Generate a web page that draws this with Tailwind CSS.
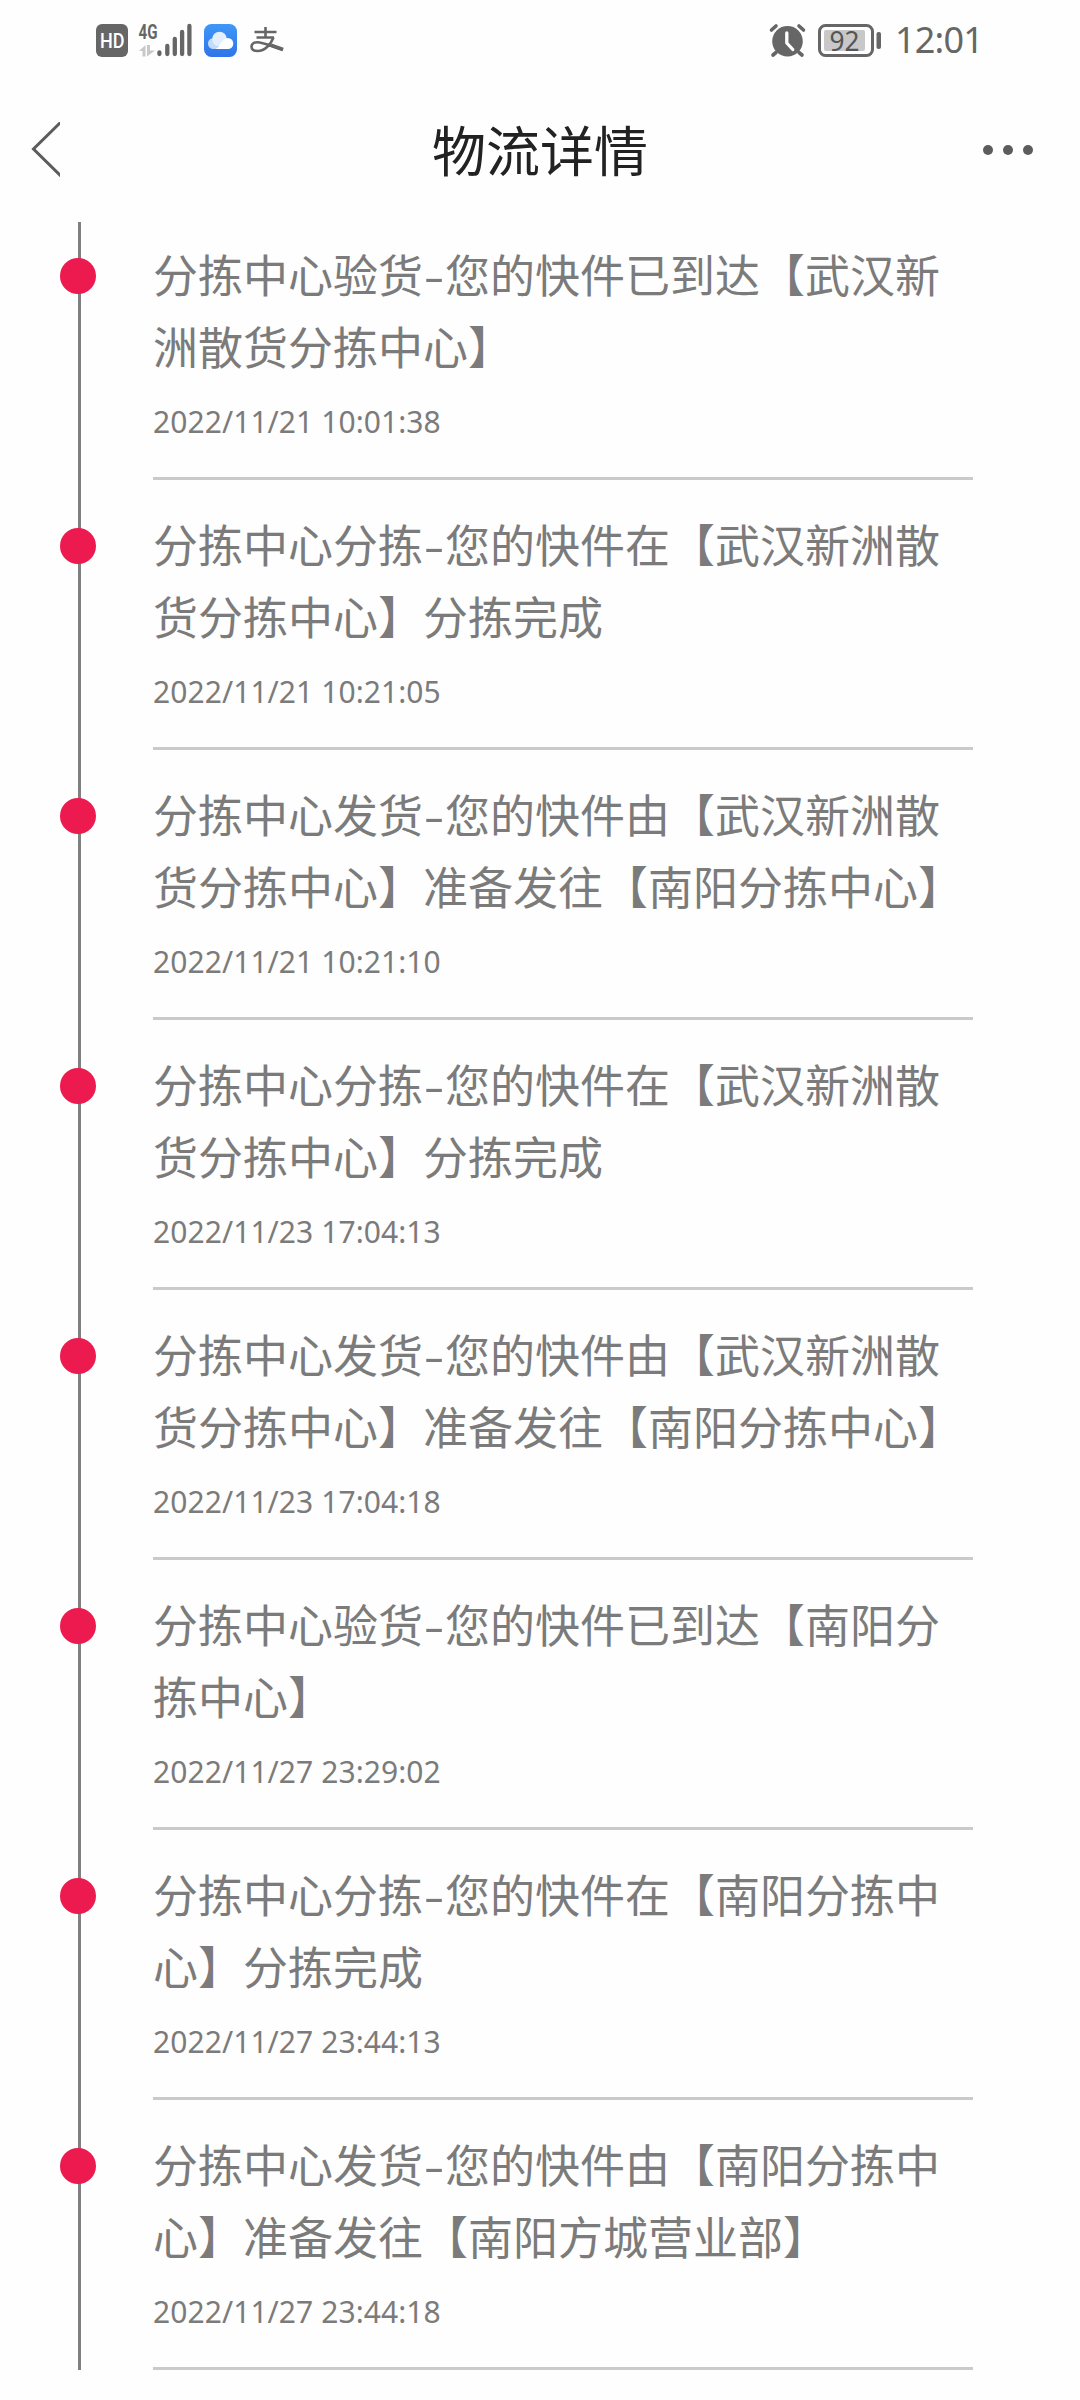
<!DOCTYPE html>
<html lang="zh-CN">
<head>
  <meta charset="UTF-8">
  <meta name="viewport" content="width=device-width, initial-scale=1.0">

  <title>物流详情</title>

  <!-- Tailwind CSS -->
  <script src="https://cdn.jsdelivr.net/npm/@tailwindcss/browser@4"></script>
</head>

<body class="bg-[#fefefe] font-['Noto_Sans','Noto_Sans_CJK_SC',sans-serif] text-[#7b7b7b]">

  <!-- Status Bar -->
  <header class="flex h-20 items-center justify-between pl-24 pr-[98px] text-[#666666]">
    <div class="flex items-center">
      <!-- HD -->
      <svg class="h-[33px] w-8 overflow-visible" viewBox="0 0 32 33">
        <rect width="32" height="33" rx="6" fill="#666"/>
        <text x="4" y="24" font-family="Roboto, sans-serif" font-weight="500" font-size="20.5" fill="#fff" textLength="24.500" lengthAdjust="spacingAndGlyphs">HD</text>
      </svg>
      <!-- 4G signal -->
      <svg class="ml-[10px] h-9 w-14 overflow-visible" viewBox="0 0 56 36">
        <text x="0.5" y="16.500" font-family="Roboto, sans-serif" font-weight="700" font-size="20" fill="#666" textLength="19" lengthAdjust="spacingAndGlyphs">4G</text>
        <g fill="#c8c8c8">
          <path d="M1 29 7.500 23V34.500H4.500V29z"/>
          <path d="M9 23h3v5.500H17L9 34.500z"/>
        </g>
        <path d="M21.400 30.500v1.500M29.300 24v8M36.800 17v15M44.100 10v22M51.400 4v28" stroke="#666" stroke-width="4.300" stroke-linecap="round"/>
      </svg>
      <!-- Cloud -->
      <svg class="ml-[10px] h-[33px] w-[33px]" viewBox="0 0 33 33">
        <defs>
          <linearGradient id="sky" x1="0" y1="0" x2="0" y2="1">
            <stop offset="0" stop-color="#3f97f7"/>
            <stop offset="1" stop-color="#2f74ea"/>
          </linearGradient>
        </defs>
        <rect width="33" height="33" rx="7.500" fill="url(#sky)"/>
        <circle cx="9.500" cy="19.500" r="5.500" fill="#c3dcfb"/>
        <circle cx="15.500" cy="15" r="7.300" fill="#e3effd"/>
        <circle cx="23.800" cy="19.500" r="5.500" fill="#fff"/>
        <path d="M9.500 25h14.500v-9c-5-1-7 3-8.500 5s-3 4-6 4z" fill="#fff"/>
      </svg>
      <!-- Alipay -->
      <svg class="ml-[13px] h-[26px] w-[34px]" viewBox="0 0 34 26" fill="none" stroke="#666">
        <path d="M4.500 5h22M15.500 0v10.500M6.500 10.500h17.500" stroke-width="2.600"/>
        <path d="M23.500 10.500C21 17 15 24 7.500 24 3 24 1.500 22 1.500 19.500S3.500 15.200 7.500 15.200c6 0 14 4.300 25.500 7.600" stroke-width="2.600"/>
        <path d="M21 18.200l12 4.300" stroke-width="3.800"/>
      </svg>
    </div>
    <div class="flex items-center">
      <!-- Alarm -->
      <svg class="h-[33px] w-[37px] overflow-visible" viewBox="0 0 37 33">
        <circle cx="18.500" cy="17.300" r="15.300" fill="#666"/>
        <path d="M2.500 6 7 2M30 2l4.500 4M7 28.500l-3 2.500M30 28.500l3 2.500" stroke="#666" stroke-width="3.600" stroke-linecap="round"/>
        <path d="M17.800 9v10l6 6.500" fill="none" stroke="#fff" stroke-width="3.300" stroke-linecap="round" stroke-linejoin="round"/>
      </svg>
      <!-- Battery -->
      <svg class="ml-3 h-[33px] w-[63px] overflow-visible" viewBox="0 0 63 33">
        <rect x="1.500" y="1.500" width="53" height="30" rx="6" fill="none" stroke="#666" stroke-width="3"/>
        <rect x="6" y="6" width="41" height="21" rx="2" fill="#c8c8c8"/>
        <rect x="58.500" y="8" width="4.500" height="17" rx="2" fill="#666"/>
        <text x="11.500" y="26.500" font-family="Noto Sans, sans-serif" font-size="27" fill="#555" textLength="30" lengthAdjust="spacingAndGlyphs">92</text>
      </svg>
      <span class="ml-[14px] w-[87px] whitespace-nowrap text-[36px] leading-[48px] tracking-[-0.8px]">12:01</span>
    </div>
  </header>

  <!-- Title Bar -->
  <nav class="flex h-[142px] items-center justify-between pb-[2px] pl-[30px] pr-[47px]">
    <button class="w-[73px]">
      <svg class="h-14 w-[30px]" viewBox="0 0 30 56" fill="none" stroke="#5c5c5c" stroke-width="3">
        <path d="M32-1 3.500 27 32 55"/>
      </svg>
    </button>
    <h1 class="-mt-[2px] font-['Noto_Sans_CJK_SC',sans-serif] text-[54px] leading-[72px] text-[#222222]">物流详情</h1>
    <button class="flex w-[56px] justify-end gap-[10px]">
      <span class="h-[10px] w-[10px] rounded-full bg-[#5c5c5c]"></span>
      <span class="h-[10px] w-[10px] rounded-full bg-[#5c5c5c]"></span>
      <span class="h-[10px] w-[10px] rounded-full bg-[#5c5c5c]"></span>
    </button>
  </nav>

  <!-- Tracking Timeline -->
  <main class="h-[2178px] overflow-hidden">
    <ol class="ml-[78px] h-[2148px] border-l-3 border-[#808080]">
      <li class="-ml-[21px] flex h-[270px] items-start">
        <span class="mt-9 h-9 w-9 rounded-full bg-[#ed1a50]"></span>
        <div class="ml-[57px] h-[258px] w-[820px] border-b-3 border-[#cacaca] pt-4">
          <p class="font-['Noto_Sans_CJK_SC',sans-serif] text-[45px] leading-[72px]">分拣中心验货<span class="mx-[3px] inline-block w-4 scale-x-135 text-center">-</span>您的快件已到达【武汉新洲散货分拣中心】</p>
          <time class="mt-[13px] block text-[30px] leading-[54px] tracking-[0.07px]">2022/11/21 10:01:38</time>
        </div>
      </li>
      <li class="-ml-[21px] flex h-[270px] items-start">
        <span class="mt-9 h-9 w-9 rounded-full bg-[#ed1a50]"></span>
        <div class="ml-[57px] h-[258px] w-[820px] border-b-3 border-[#cacaca] pt-4">
          <p class="font-['Noto_Sans_CJK_SC',sans-serif] text-[45px] leading-[72px]">分拣中心分拣<span class="mx-[3px] inline-block w-4 scale-x-135 text-center">-</span>您的快件在【武汉新洲散货分拣中心】分拣完成</p>
          <time class="mt-[13px] block text-[30px] leading-[54px] tracking-[0.07px]">2022/11/21 10:21:05</time>
        </div>
      </li>
      <li class="-ml-[21px] flex h-[270px] items-start">
        <span class="mt-9 h-9 w-9 rounded-full bg-[#ed1a50]"></span>
        <div class="ml-[57px] h-[258px] w-[820px] border-b-3 border-[#cacaca] pt-4">
          <p class="font-['Noto_Sans_CJK_SC',sans-serif] text-[45px] leading-[72px]">分拣中心发货<span class="mx-[3px] inline-block w-4 scale-x-135 text-center">-</span>您的快件由【武汉新洲散货分拣中心】准备发往【南阳分拣中心】</p>
          <time class="mt-[13px] block text-[30px] leading-[54px] tracking-[0.07px]">2022/11/21 10:21:10</time>
        </div>
      </li>
      <li class="-ml-[21px] flex h-[270px] items-start">
        <span class="mt-9 h-9 w-9 rounded-full bg-[#ed1a50]"></span>
        <div class="ml-[57px] h-[258px] w-[820px] border-b-3 border-[#cacaca] pt-4">
          <p class="font-['Noto_Sans_CJK_SC',sans-serif] text-[45px] leading-[72px]">分拣中心分拣<span class="mx-[3px] inline-block w-4 scale-x-135 text-center">-</span>您的快件在【武汉新洲散货分拣中心】分拣完成</p>
          <time class="mt-[13px] block text-[30px] leading-[54px] tracking-[0.07px]">2022/11/23 17:04:13</time>
        </div>
      </li>
      <li class="-ml-[21px] flex h-[270px] items-start">
        <span class="mt-9 h-9 w-9 rounded-full bg-[#ed1a50]"></span>
        <div class="ml-[57px] h-[258px] w-[820px] border-b-3 border-[#cacaca] pt-4">
          <p class="font-['Noto_Sans_CJK_SC',sans-serif] text-[45px] leading-[72px]">分拣中心发货<span class="mx-[3px] inline-block w-4 scale-x-135 text-center">-</span>您的快件由【武汉新洲散货分拣中心】准备发往【南阳分拣中心】</p>
          <time class="mt-[13px] block text-[30px] leading-[54px] tracking-[0.07px]">2022/11/23 17:04:18</time>
        </div>
      </li>
      <li class="-ml-[21px] flex h-[270px] items-start">
        <span class="mt-9 h-9 w-9 rounded-full bg-[#ed1a50]"></span>
        <div class="ml-[57px] h-[258px] w-[820px] border-b-3 border-[#cacaca] pt-4">
          <p class="font-['Noto_Sans_CJK_SC',sans-serif] text-[45px] leading-[72px]">分拣中心验货<span class="mx-[3px] inline-block w-4 scale-x-135 text-center">-</span>您的快件已到达【南阳分拣中心】</p>
          <time class="mt-[13px] block text-[30px] leading-[54px] tracking-[0.07px]">2022/11/27 23:29:02</time>
        </div>
      </li>
      <li class="-ml-[21px] flex h-[270px] items-start">
        <span class="mt-9 h-9 w-9 rounded-full bg-[#ed1a50]"></span>
        <div class="ml-[57px] h-[258px] w-[820px] border-b-3 border-[#cacaca] pt-4">
          <p class="font-['Noto_Sans_CJK_SC',sans-serif] text-[45px] leading-[72px]">分拣中心分拣<span class="mx-[3px] inline-block w-4 scale-x-135 text-center">-</span>您的快件在【南阳分拣中心】分拣完成</p>
          <time class="mt-[13px] block text-[30px] leading-[54px] tracking-[0.07px]">2022/11/27 23:44:13</time>
        </div>
      </li>
      <li class="-ml-[21px] flex h-[270px] items-start">
        <span class="mt-9 h-9 w-9 rounded-full bg-[#ed1a50]"></span>
        <div class="ml-[57px] h-[258px] w-[820px] border-b-3 border-[#cacaca] pt-4">
          <p class="font-['Noto_Sans_CJK_SC',sans-serif] text-[45px] leading-[72px]">分拣中心发货<span class="mx-[3px] inline-block w-4 scale-x-135 text-center">-</span>您的快件由【南阳分拣中心】准备发往【南阳方城营业部】</p>
          <time class="mt-[13px] block text-[30px] leading-[54px] tracking-[0.07px]">2022/11/27 23:44:18</time>
        </div>
      </li>
    </ol>
  </main>

</body>
</html>
